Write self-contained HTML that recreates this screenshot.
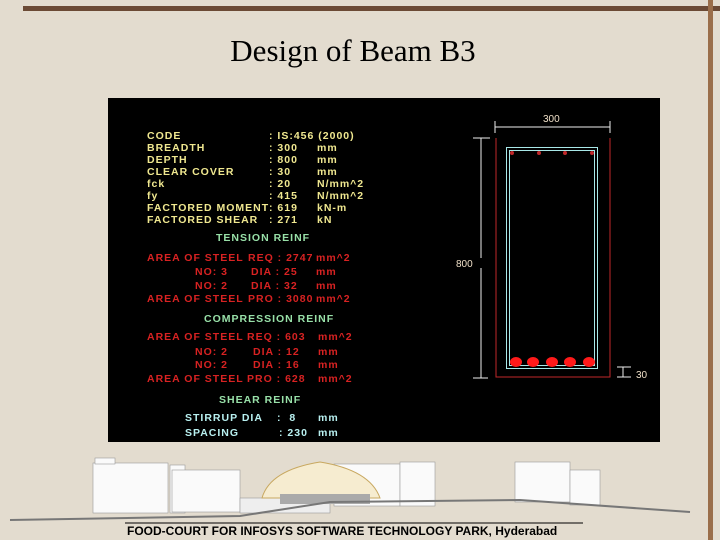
<!DOCTYPE html>
<html><head><style>
body{margin:0;width:720px;height:540px;background:#e3dccf;position:relative;overflow:hidden;font-family:"Liberation Sans",sans-serif}
.a{position:absolute;white-space:pre}
#p{position:absolute;left:108px;top:98px;width:552px;height:344px;background:#000}
.t{position:absolute;font-family:"Liberation Sans",sans-serif;font-weight:bold;font-size:10.5px;letter-spacing:1px;white-space:pre;line-height:10px}
.y{color:#f0e890}.g{color:#98e0a8}.r{color:#d82222}.c{color:#b8f0f0}
</style></head><body>
<div class="a" style="left:23px;top:6px;width:697px;height:5px;background:#6b4a35"></div>
<div class="a" style="left:708px;top:0;width:5px;height:540px;background:#9a6e4a"></div>
<div class="a" style="left:0;top:33px;width:706px;text-align:center;font-family:'Liberation Serif',serif;font-size:31px;color:#000">Design of Beam B3</div>
<div id="p"></div>
<div class="t y" style="left:147px;top:131px">CODE</div><div class="t y" style="left:269px;top:131px">: IS:456 (2000)</div>
<div class="t y" style="left:147px;top:143px">BREADTH</div><div class="t y" style="left:269px;top:143px">: 300</div><div class="t y" style="left:317px;top:143px">mm</div>
<div class="t y" style="left:147px;top:155px">DEPTH</div><div class="t y" style="left:269px;top:155px">: 800</div><div class="t y" style="left:317px;top:155px">mm</div>
<div class="t y" style="left:147px;top:167px">CLEAR COVER</div><div class="t y" style="left:269px;top:167px">: 30</div><div class="t y" style="left:317px;top:167px">mm</div>
<div class="t y" style="left:147px;top:179px">fck</div><div class="t y" style="left:269px;top:179px">: 20</div><div class="t y" style="left:317px;top:179px">N/mm^2</div>
<div class="t y" style="left:147px;top:191px">fy</div><div class="t y" style="left:269px;top:191px">: 415</div><div class="t y" style="left:317px;top:191px">N/mm^2</div>
<div class="t y" style="left:147px;top:203px">FACTORED MOMENT</div><div class="t y" style="left:269px;top:203px">: 619</div><div class="t y" style="left:317px;top:203px">kN-m</div>
<div class="t y" style="left:147px;top:215px">FACTORED SHEAR</div><div class="t y" style="left:269px;top:215px">: 271</div><div class="t y" style="left:317px;top:215px">kN</div>
<div class="t g" style="left:216px;top:233px">TENSION REINF</div>
<div class="t r" style="left:147px;top:253px">AREA OF STEEL</div><div class="t r" style="left:248px;top:253px">REQ : 2747</div><div class="t r" style="left:316px;top:253px">mm^2</div>
<div class="t r" style="left:195px;top:267px">NO: 3</div><div class="t r" style="left:251px;top:267px">DIA : 25</div><div class="t r" style="left:316px;top:267px">mm</div>
<div class="t r" style="left:195px;top:281px">NO: 2</div><div class="t r" style="left:251px;top:281px">DIA : 32</div><div class="t r" style="left:316px;top:281px">mm</div>
<div class="t r" style="left:147px;top:294px">AREA OF STEEL</div><div class="t r" style="left:248px;top:294px">PRO : 3080</div><div class="t r" style="left:316px;top:294px">mm^2</div>
<div class="t g" style="left:204px;top:314px">COMPRESSION REINF</div>
<div class="t r" style="left:147px;top:332px">AREA OF STEEL</div><div class="t r" style="left:247px;top:332px">REQ : 603</div><div class="t r" style="left:318px;top:332px">mm^2</div>
<div class="t r" style="left:195px;top:347px">NO: 2</div><div class="t r" style="left:253px;top:347px">DIA : 12</div><div class="t r" style="left:318px;top:347px">mm</div>
<div class="t r" style="left:195px;top:360px">NO: 2</div><div class="t r" style="left:253px;top:360px">DIA : 16</div><div class="t r" style="left:318px;top:360px">mm</div>
<div class="t r" style="left:147px;top:374px">AREA OF STEEL</div><div class="t r" style="left:247px;top:374px">PRO : 628</div><div class="t r" style="left:318px;top:374px">mm^2</div>
<div class="t g" style="left:219px;top:395px">SHEAR REINF</div>
<div class="t c" style="left:185px;top:413px">STIRRUP DIA</div><div class="t c" style="left:277px;top:413px">:  8</div><div class="t c" style="left:318px;top:413px">mm</div>
<div class="t c" style="left:185px;top:428px">SPACING</div><div class="t c" style="left:279px;top:428px">: 230</div><div class="t c" style="left:318px;top:428px">mm</div>
<svg class="a" style="left:0;top:0" width="720" height="540">
<g stroke="#eee" stroke-width="1" fill="none">
<line x1="495" y1="127" x2="610" y2="127"/><line x1="495" y1="121" x2="495" y2="133"/><line x1="610" y1="121" x2="610" y2="133"/>
<line x1="481" y1="138" x2="481" y2="258"/><line x1="481" y1="268" x2="481" y2="378"/>
<line x1="473" y1="138" x2="490" y2="138"/><line x1="473" y1="378" x2="488" y2="378"/>
<line x1="623" y1="367" x2="623" y2="377"/><line x1="617" y1="367" x2="631" y2="367"/><line x1="617" y1="377" x2="631" y2="377"/>
</g>
<path d="M496 138V377H610V138" stroke="#c0282a" fill="none"/>
<rect x="506.5" y="147.5" width="91" height="221" stroke="#a8e8e8" fill="none"/>
<rect x="509.5" y="150.5" width="85" height="215" stroke="#a8e8e8" fill="none"/>
<g fill="#c0282a"><circle cx="512" cy="153" r="2"/><circle cx="539" cy="153" r="2"/><circle cx="565" cy="153" r="2"/><circle cx="592" cy="153" r="2"/></g>
<g fill="#ff1a1a"><ellipse cx="516" cy="362" rx="6" ry="5"/><ellipse cx="533" cy="362" rx="6" ry="5"/><ellipse cx="552" cy="362" rx="6" ry="5"/><ellipse cx="570" cy="362" rx="6" ry="5"/><ellipse cx="589" cy="362" rx="6" ry="5"/></g>
<g fill="#f0e0c8" font-family="Liberation Sans" font-size="10"><text x="543" y="122">300</text><text x="456" y="267">800</text><text x="636" y="378">30</text></g>
<g stroke="#9a9a9a" fill="#fafafa" stroke-width="0.6">
<rect x="93" y="463" width="75" height="50"/><rect x="95" y="458" width="20" height="6"/>
<rect x="170" y="465" width="15" height="48"/>
<rect x="172" y="470" width="68" height="42"/>
<rect x="334" y="464" width="66" height="42"/><rect x="400" y="462" width="35" height="44"/>
<rect x="515" y="462" width="55" height="40"/><rect x="570" y="470" width="30" height="35"/>
<rect x="240" y="498" width="90" height="15" fill="#eee"/>
</g>
<path d="M262 498Q270 470 320 462Q370 470 380 498Z" fill="#f6ecd0" stroke="#c8a860"/>
<rect x="280" y="494" width="90" height="10" fill="#aaa"/>
<path d="M10 520L240 516L330 502L520 500L690 512" stroke="#777" fill="none" stroke-width="2"/>
<line x1="125" y1="523" x2="583" y2="523" stroke="#000"/>
</svg>
<div class="a" style="left:127px;top:524px;font-size:12px;font-weight:bold;color:#000">FOOD-COURT FOR INFOSYS SOFTWARE TECHNOLOGY PARK, Hyderabad</div>
</body></html>
